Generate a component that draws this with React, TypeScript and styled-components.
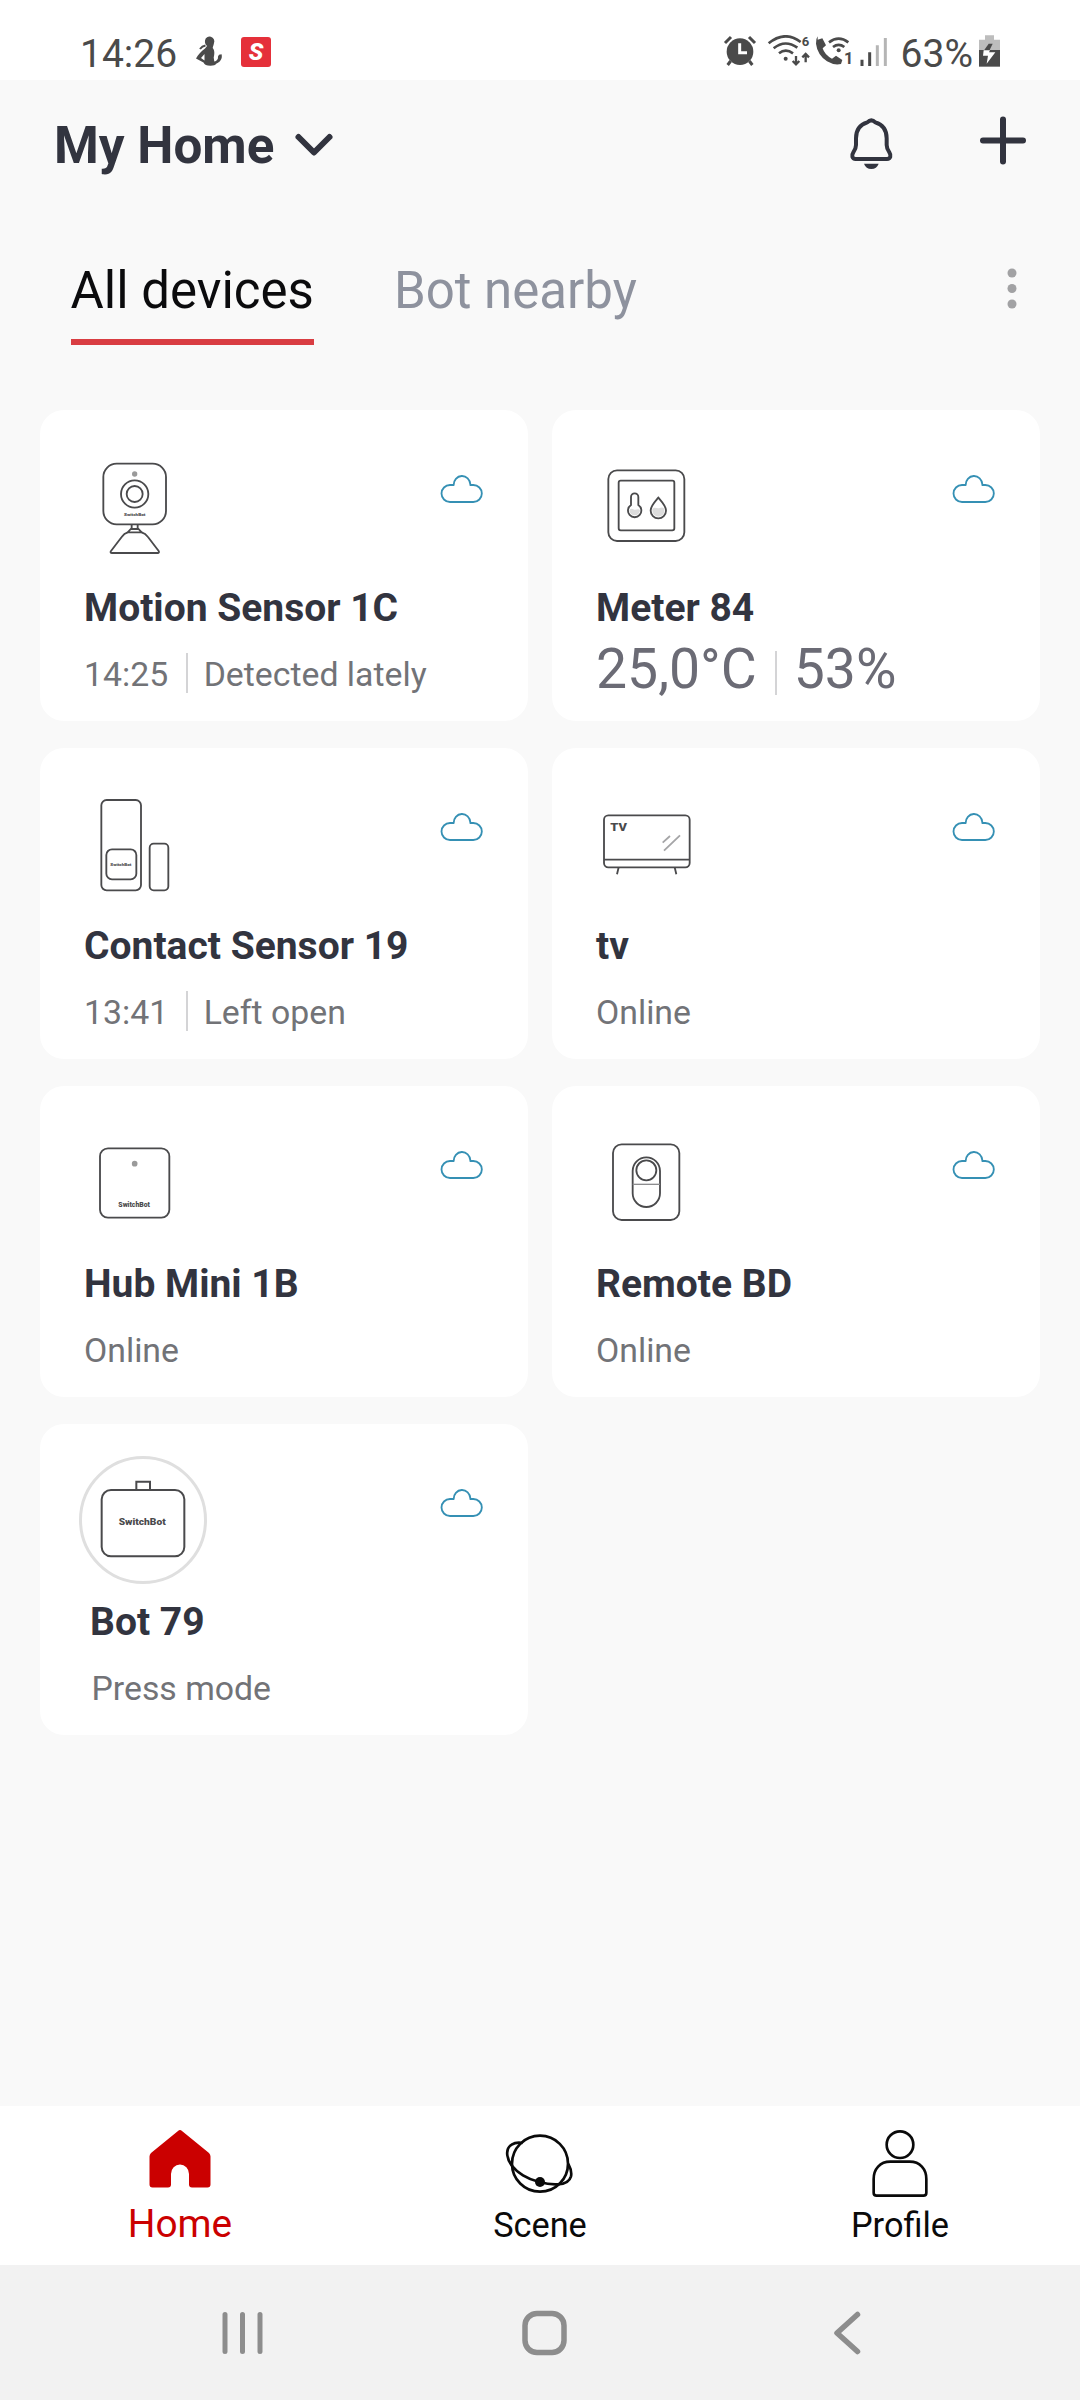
import React from "react";
import styled, { createGlobalStyle } from "styled-components";

const GlobalStyle = createGlobalStyle`
  *, *::before, *::after { box-sizing: border-box; }
  body {
    margin: 0;
    background: #f9f9f9;
    font-family: Roboto, "Noto Sans", sans-serif;
  }
  svg { display: block; flex: none; }
`;

const ink = "#32343f";
const line = "#4a4a4c";

const Screen = styled.div`
  width: 1080px;
  height: 2400px;
  display: flex;
  flex-direction: column;
  background: #f9f9f9;
  overflow: hidden;
`;

/* ---------- status bar ---------- */

const StatusBar = styled.header`
  height: 80px;
  flex: none;
  display: flex;
  justify-content: space-between;
  align-items: flex-start;
  padding: 31px 79px 0 80px;
  background: #fff;
  color: #4a4a4a;
`;

const StatusGroup = styled.div`
  display: flex;
  align-items: flex-start;
`;

const StatusText = styled.span<{ $before?: number }>`
  margin-left: ${(p) => p.$before ?? 0}px;
  font-size: 39px;
  line-height: 46px;
  white-space: nowrap;
`;

const StatusIcon = styled.svg<{ $before?: number }>`
  margin-top: 4px;
  margin-left: ${(p) => p.$before ?? 0}px;
`;

const AppBadge = styled.span`
  width: 30px;
  height: 30px;
  margin: 6px 0 0 18px;
  border-radius: 3px;
  background: #e5303a;
  color: #fff;
  font-size: 24px;
  font-weight: 900;
  font-style: italic;
  line-height: 30px;
  text-align: center;
`;

/* ---------- title bar and tabs ---------- */

const TitleBar = styled.div`
  height: 148px;
  flex: none;
  display: flex;
  justify-content: space-between;
  align-items: flex-start;
  padding: 36px 51px 0 54px;
`;

const HomePicker = styled.button`
  display: flex;
  align-items: center;
  gap: 18px;
  padding: 0;
  border: 0;
  background: none;
  color: ${ink};
  font: 700 51.2px/60px Roboto, "Noto Sans", sans-serif;
`;

const TitleActions = styled.div`
  display: flex;
  gap: 82px;
  margin-top: -1px;
`;

const TabBar = styled.nav`
  height: 182px;
  flex: none;
  display: flex;
  align-items: flex-start;
  padding: 33px 60px 0 70.5px;
`;

const Tab = styled.a<{ $active?: boolean }>`
  height: 84px;
  margin-right: 80px;
  font-size: 51px;
  line-height: 60px;
  white-space: nowrap;
  color: ${(p) => (p.$active ? "#0b0b0d" : "#8e929e")};
  border-bottom: 6px solid ${(p) => (p.$active ? "#d93d42" : "transparent")};
`;

const TabMenu = styled.svg`
  margin-left: auto;
  margin-top: 2px;
  margin-right: 2px;
`;

/* ---------- device cards ---------- */

const DeviceGrid = styled.main`
  flex: 1;
  display: grid;
  grid-template-columns: 487.5px 487.5px;
  grid-auto-rows: 311px;
  gap: 27px 24.5px;
  padding: 0 40px;
`;

const Card = styled.article`
  display: flex;
  flex-direction: column;
  border-radius: 24px;
  background: #fff;
`;

const CardTop = styled.div`
  height: 174px;
  flex: none;
  display: flex;
  justify-content: space-between;
  align-items: flex-start;
  padding-right: 42px;
`;

const IconSlot = styled.div`
  padding: 44px 0 0 40px;
`;

const RoundIcon = styled.div`
  width: 128px;
  height: 128px;
  margin: 32px 0 0 39px;
  display: flex;
  align-items: center;
  justify-content: center;
  border: 3px solid #dfdfdf;
  border-radius: 50%;
`;

const CloudIcon = styled.svg`
  margin-top: 62px;
`;

const DeviceName = styled.h2<{ $inset: number }>`
  margin: 0;
  padding-left: ${(p) => p.$inset}px;
  color: ${ink};
  font-size: 39px;
  font-weight: 700;
  line-height: 48px;
`;

const DeviceState = styled.div<{ $inset: number; $large?: boolean }>`
  display: flex;
  align-items: center;
  margin-top: ${(p) => (p.$large ? 6 : 21)}px;
  padding-left: ${(p) => p.$inset}px;
  color: ${(p) => (p.$large ? "#6b6b75" : "#727377")};
  font-size: ${(p) => (p.$large ? 55.3 : 33.8)}px;
  line-height: ${(p) => (p.$large ? 64 : 44)}px;
  white-space: nowrap;
`;

const Divider = styled.i<{ $large?: boolean }>`
  width: 2px;
  height: ${(p) => (p.$large ? 44 : 40)}px;
  margin: ${(p) => (p.$large ? "6px 17px 0 18px" : "0 16px 4px 17.5px")};
  background: #d4d4d6;
`;

/* ---------- bottom bars ---------- */

const BottomNav = styled.nav`
  height: 159px;
  flex: none;
  display: grid;
  grid-template-columns: repeat(3, 360px);
  background: #fff;
`;

const NavItem = styled.a<{ $active?: boolean }>`
  display: flex;
  flex-direction: column;
  align-items: center;
  padding-top: 20px;
  color: ${(p) => (p.$active ? "#cb0000" : "#0a0a0a")};
  font-size: ${(p) => (p.$active ? 38.8 : 34.3)}px;
  line-height: 46px;

  span { margin-top: ${(p) => (p.$active ? 1 : 2)}px; }
`;

const SystemBar = styled.footer`
  height: 135px;
  flex: none;
  display: flex;
  justify-content: space-between;
  padding: 40px 214px 0 218px;
  background: #f2f2f2;
`;

/* ---------- drawings ---------- */

interface WordmarkProps {
  x: number;
  y: number;
  size: number;
  width: number;
}

const Wordmark = ({ x, y, size, width }: WordmarkProps) => (
  <text
    x={x}
    y={y}
    fontSize={size}
    fontWeight="900"
    textLength={width}
    lengthAdjust="spacingAndGlyphs"
    fill={line}
    stroke="none"
  >
    SwitchBot
  </text>
);

const MotionSensor = () => (
  <svg width="108" height="108" viewBox="150 162 324 324" fill="none" stroke={line} strokeWidth="5.5">
    <rect x="220" y="191" width="188" height="182" rx="40" />
    <circle cx="314" cy="282" r="41" />
    <circle cx="314" cy="282" r="24" />
    <circle cx="314" cy="222" r="8" fill="#9a9a9a" stroke="none" />
    <Wordmark x={282} y={348} size={13} width={64} />
    <path d="M305 374v10l-12 13h42l-12-13v-10M302 387h24" />
    <path d="M293 397c-8 2-14 8-18 14l-32 42c-3 4-1 6 3 6h137c4 0 5-3 3-6l-32-42c-5-7-11-12-19-14" />
  </svg>
);

const Meter = () => (
  <svg width="108" height="108" viewBox="156 162 324 324" fill="none" stroke={line} strokeWidth="5.5">
    <rect x="205" y="211" width="228" height="212" rx="26" />
    <rect x="236" y="242" width="167" height="149" rx="6" />
    <path d="M273 291a11 11 0 0 1 22 0v24a20 20 0 1 1-22 0z" />
    <path d="M268 330a16 16 0 1 0 32 0c-7-6-13 3-20-2-4-3-8-2-12 2z" fill="#dcdcdc" stroke="none" />
    <path d="M355 293c10 12 23 24 23 39a23 23 0 0 1-46 0c0-15 13-27 23-39z" />
    <path d="M337 326c9-7 15 2 22-2 5-3 10-2 14 2v6a18 18 0 0 1-36 0z" fill="#dcdcdc" stroke="none" />
  </svg>
);

const ContactSensor = () => (
  <svg width="108" height="108" viewBox="150 156 324 324" fill="none" stroke={line} strokeWidth="5.5">
    <rect x="214" y="180" width="119" height="271" rx="16" />
    <rect x="229" y="328" width="90" height="90" rx="17" />
    <rect x="359" y="311" width="56" height="140" rx="12" />
    <Wordmark x={241} y={379} size={13} width={63} />
  </svg>
);

const Television = () => (
  <svg width="108" height="108" viewBox="156 156 324 324" fill="none" stroke={line} strokeWidth="5.5">
    <rect x="192" y="226" width="257" height="156" rx="13" />
    <path d="M192 359h257M236 382l-5 21M404 382l5 21" />
    <path d="M368 308l22-20M372 332l48-46" stroke="#a5a5a7" />
    <text x="211" y="274" fontSize="33" fontWeight="900" textLength="50" lengthAdjust="spacingAndGlyphs" fill={line} stroke="none">TV</text>
  </svg>
);

const HubMini = () => (
  <svg width="108" height="108" viewBox="150 150 324 324" fill="none" stroke={line} strokeWidth="5.5">
    <rect x="210" y="205" width="208" height="208" rx="24" />
    <circle cx="314" cy="251" r="8.5" fill="#9a9a9a" stroke="none" />
    <Wordmark x={265} y={381} size={20} width={95} />
  </svg>
);

const Remote = () => (
  <svg width="108" height="108" viewBox="156 150 324 324" fill="none" stroke={line} strokeWidth="5.5">
    <rect x="219" y="193" width="199" height="227" rx="26" />
    <rect x="278" y="232" width="82" height="149" rx="41" />
    <circle cx="319" cy="271" r="30" />
    <path d="M278 313h82" stroke="#8c8c8e" strokeWidth="4" />
  </svg>
);

const Bot = () => (
  <svg width="108" height="108" viewBox="178 169 324 324" fill="none" stroke={line} strokeWidth="6">
    <rect x="216" y="241" width="248" height="199" rx="28" />
    <path d="M320 241v-25h41v25" />
    <Wordmark x={267} y={347} size={28} width={141} />
  </svg>
);

const Cloud = () => (
  <CloudIcon width="48" height="34" viewBox="1224 216 144 102" fill="none" stroke="#3590b4" strokeWidth="5.5" strokeLinejoin="round">
    <path d="M1260 306a25.500 25.500 0 0 1 0-51h11a25 26 0 0 1 50-2v2h9a25.500 25.500 0 0 1 0 51z" />
  </CloudIcon>
);

interface Device {
  name: string;
  Icon: () => React.JSX.Element;
  state: string[];
  large?: boolean;
  round?: boolean;
}

const devices: Device[] = [
  { name: "Motion Sensor 1C", Icon: MotionSensor, state: ["14:25", "Detected lately"] },
  { name: "Meter 84", Icon: Meter, state: ["25,0°C", "53%"], large: true },
  { name: "Contact Sensor 19", Icon: ContactSensor, state: ["13:41", "Left open"] },
  { name: "tv", Icon: Television, state: ["Online"] },
  { name: "Hub Mini 1B", Icon: HubMini, state: ["Online"] },
  { name: "Remote BD", Icon: Remote, state: ["Online"] },
  { name: "Bot 79", Icon: Bot, state: ["Press mode"], round: true },
];

const DeviceCard = ({ name, Icon, state, large, round }: Device) => (
  <Card>
    <CardTop>
      {round ? <RoundIcon><Icon /></RoundIcon> : <IconSlot><Icon /></IconSlot>}
      <Cloud />
    </CardTop>
    <DeviceName $inset={round ? 50 : 44}>{name}</DeviceName>
    <DeviceState $inset={round ? 51.5 : 44} $large={large}>
      <span>{state[0]}</span>
      {state[1] && (
        <>
          <Divider $large={large} />
          <span>{state[1]}</span>
        </>
      )}
    </DeviceState>
  </Card>
);

export default function App() {
  return (
    <Screen>
      <GlobalStyle />
      <StatusBar>
        <StatusGroup>
          <StatusText>14:26</StatusText>
          <StatusIcon $before={19} width="27" height="34" viewBox="0 0 27 34" fill="#4a4a4a">
            <path d="M9 5.500a4.700 4.700 0 1 1 9 2.500c-.4 2-1 3.500-1.300 5 2.200 2.500 1.800 6 1 9.500l.6 4c2.500-.5 4-2.200 3.700-5l1-1.800 2.600-.4c1.200 5-2.100 8.200-5.100 9.200-1 1.700-3 2.200-6 2.200-4 0-6-.7-7-3.200L0 23.500c2-3.500 5-7.500 9-10l2-2.500c-1.700-1.500-2.300-3.500-2-5.500zM8.500 19l-3.500 4 3.500 2.500z" fillRule="evenodd" />
            <path d="M4 14c1.500-2 3-3 5.500-3.500" fill="none" stroke="#4a4a4a" strokeWidth="2" />
          </StatusIcon>
          <AppBadge>S</AppBadge>
        </StatusGroup>
        <StatusGroup>
          {/* alarm */}
          <StatusIcon width="34" height="34" viewBox="69 105 102 102" fill="#4a4a4a">
            <circle cx="120" cy="155" r="40" />
            <path d="M75 129l18-18M147 111l18 18" stroke="#4a4a4a" strokeWidth="9" />
            <path d="M92 183l-9 12M148 183l9 12" stroke="#4a4a4a" strokeWidth="9" />
            <path d="M119 130v28h22" fill="none" stroke="#fff" strokeWidth="9" />
          </StatusIcon>
          {/* wifi with traffic arrows */}
          <StatusIcon $before={10} width="44" height="34" viewBox="202 105 132 102" fill="none" stroke="#4a4a4a" strokeWidth="8">
            <path d="M207 130q48-40 96-4M222 145q34-28 71-2M238 160q20-16 42 0" />
            <circle cx="258" cy="176" r="6" fill="#4a4a4a" stroke="none" />
            <path d="M289 168v24M279 183l10 10 10-10M318 187v-24M308 172l10-10 10 10" strokeWidth="7" />
            <text x="306" y="139" fontSize="39" fontWeight="700" fill="#4a4a4a" stroke="none">6</text>
          </StatusIcon>
          {/* wifi calling */}
          <StatusIcon $before={3.500} width="38" height="34" viewBox="343 105 114 102" fill="#4a4a4a">
            <path d="M351 119l14-4 11 21-10 9q6 20 28 31l12-9 19 13-4 12q-20 5-42-8-29-20-33-53-1-14 5-22z" />
            <path d="M385 127q29-22 58 0M397 141q17-13 34 0" fill="none" stroke="#4a4a4a" strokeWidth="8" />
            <circle cx="414" cy="151" r="6" />
            <text x="430" y="192" fontSize="49" fontWeight="700">1</text>
          </StatusIcon>
          {/* signal strength */}
          <StatusIcon $before={6} width="30" height="34" viewBox="475 105 90 102">
            <path d="M484 179v19M507 157v41" stroke="#4a4a4a" strokeWidth="9" />
            <path d="M530 136v62M554 114v84" stroke="#b5b5b5" strokeWidth="9" />
          </StatusIcon>
          <StatusText $before={12}>63%</StatusText>
          <StatusIcon $before={6} width="22" height="34" viewBox="837 105 66 102">
            <path d="M855 106h27v13h18v33h-63v-33h18z" fill="#bdbdbd" />
            <path d="M837 150h63v50h-63z" fill="#4a4a4a" />
            <path d="M866 131h12l-9 19h-16z" fill="#4a4a4a" />
            <path d="M851 151h19l-3 6h19l-26 34 4-24h-15z" fill="#fff" />
          </StatusIcon>
        </StatusGroup>
      </StatusBar>

      <TitleBar>
        <HomePicker>
          My Home
          <svg width="44" height="30" viewBox="0 0 44 30" fill="none" stroke={ink} strokeWidth="6" strokeLinecap="round" strokeLinejoin="round">
            <path d="M6.500 6l15.500 15.500L37.500 6" />
          </svg>
        </HomePicker>
        <TitleActions>
          <svg width="48" height="56" viewBox="441 345 144 168" fill="none" stroke={ink} strokeWidth="12" strokeLinejoin="round">
            <path d="M502 367q12-12 24 0c24 7 34 26 34 48v20c0 10 3 15 8 22 6 9 4 20-7 20h-94c-11 0-13-11-7-20 5-7 8-12 8-22v-20c0-22 10-41 34-48z" />
            <path d="M492 491h44q-6 16-22 16t-22-16z" fill={ink} stroke="none" />
          </svg>
          <svg width="52" height="52" viewBox="0 0 52 52" stroke={ink} strokeWidth="6" strokeLinecap="round">
            <path d="M26 4.500v42M6 25.500h40" />
          </svg>
        </TitleActions>
      </TitleBar>

      <TabBar>
        <Tab $active>All devices</Tab>
        <Tab>Bot nearby</Tab>
        <TabMenu width="12" height="48" viewBox="0 0 12 48" fill="#a2a2a4">
          <circle cx="6" cy="10" r="4.500" />
          <circle cx="6" cy="25.500" r="4.500" />
          <circle cx="6" cy="41" r="4.500" />
        </TabMenu>
      </TabBar>

      <DeviceGrid>
        {devices.map((d) => (
          <DeviceCard key={d.name} {...d} />
        ))}
      </DeviceGrid>

      <BottomNav>
        <NavItem $active>
          <svg width="64" height="74" viewBox="0 0 64 74" fill="#cb0000">
            <path d="M30 5q2-2 4 0l27 22q1.500 1.500 1.500 3.500v28q0 3-3 3H44q-3 0-3-3V48a9 9.500 0 0 0-18 0v10.500q0 3-3 3H4.500q-3 0-3-3v-28q0-2 1.500-3.500z" />
          </svg>
          <span>Home</span>
        </NavItem>
        <NavItem>
          <svg width="72" height="74" viewBox="75 48 216 222" fill="none" stroke="#0a0a0a" strokeWidth="8">
            <circle cx="183" cy="161" r="84" />
            <path d="M131 99c-12-2-24-1-33 5-10 6-15 18-13 32 3 22 22 44 47 60 26 16 70 29 104 27 22-1 36-9 40-24 3-14-2-26-8-37" />
            <circle cx="183" cy="216" r="15" fill="#0a0a0a" stroke="none" />
          </svg>
          <span>Scene</span>
        </NavItem>
        <NavItem>
          <svg width="60" height="74" viewBox="1170 48 180 222" fill="none" stroke="#0a0a0a" strokeWidth="8">
            <circle cx="1260" cy="104" r="40" />
            <path d="M1231 155h58c31 0 50 22 50 52v41q0 9-9 9h-140q-9 0-9-9v-41c0-30 19-52 50-52z" />
          </svg>
          <span>Profile</span>
        </NavItem>
      </BottomNav>

      <SystemBar>
        <svg width="48" height="56" viewBox="0 0 48 56" stroke="#8d8d8d" strokeWidth="5" strokeLinecap="round">
          <path d="M7 9.500v37M24.500 9.500v37M42 9.500v37" />
        </svg>
        <svg width="52" height="56" viewBox="0 0 52 56" fill="none" stroke="#8d8d8d" strokeWidth="5.500">
          <rect x="5" y="8.500" width="39" height="39" rx="12" />
        </svg>
        <svg width="40" height="56" viewBox="0 0 40 56" fill="none" stroke="#8d8d8d" strokeWidth="5.500" strokeLinecap="round" strokeLinejoin="round">
          <path d="M31.500 9.500L11 28l20.500 18.500" />
        </svg>
      </SystemBar>
    </Screen>
  );
}
